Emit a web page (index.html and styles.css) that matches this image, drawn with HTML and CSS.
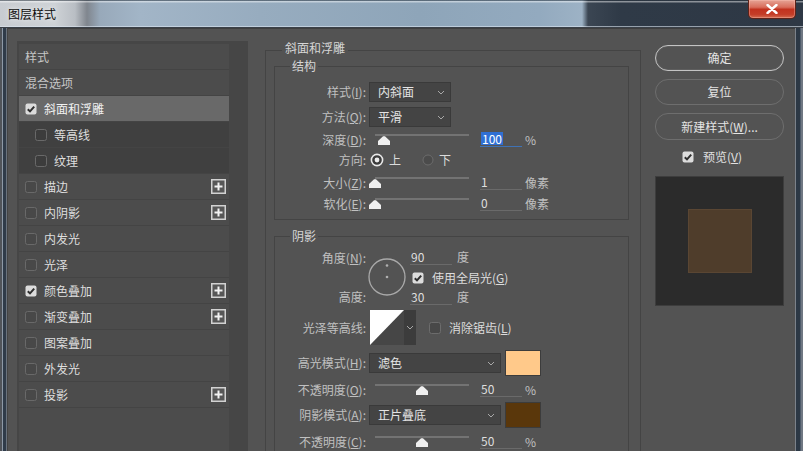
FILE: index.html
```html
<!DOCTYPE html>
<html lang="zh">
<head>
<meta charset="utf-8">
<title>图层样式</title>
<link rel="stylesheet" href="styles.css">
</head>
<body>
<div class="window">
  <div class="titlebar">
    <span class="title">图层样式</span>
    <div class="close"><svg width="12" height="10" viewBox="0 0 12 10"><path d="M1.5 1l9 8M10.5 1l-9 8" stroke="#fff" stroke-width="2.4" stroke-linecap="round"/></svg></div>
  </div>
  <div class="frame">
    <div class="edge-left"></div>
    <div class="content">
      <aside class="sidebar">
        <ul class="list">
          <li class="item plain">样式</li>
          <li class="item plain">混合选项</li>
          <li class="item selected"><span class="cb"><svg viewBox="0 0 12 12"><rect x=".5" y=".5" width="11" height="11" rx="2" fill="#dcdcdc"/><path d="M2.8 6.2l2.2 2.2 4.2-4.8" stroke="#2e2e2e" stroke-width="2" fill="none"/></svg></span>斜面和浮雕</li>
          <li class="item sub"><span class="cb"><svg viewBox="0 0 12 12"><rect x=".5" y=".5" width="11" height="11" rx="2" fill="#3c3c3c" stroke="#696969"/></svg></span>等高线</li>
          <li class="item sub"><span class="cb"><svg viewBox="0 0 12 12"><rect x=".5" y=".5" width="11" height="11" rx="2" fill="#3c3c3c" stroke="#696969"/></svg></span>纹理</li>
          <li class="item"><span class="cb"><svg viewBox="0 0 12 12"><rect x=".5" y=".5" width="11" height="11" rx="2" fill="#484848" stroke="#696969"/></svg></span>描边<span class="plus"><svg viewBox="0 0 15 15"><rect x=".75" y=".75" width="13.5" height="13.5" fill="#575757" stroke="#d2d2d2" stroke-width="1.5"/><path d="M7.5 3.5v8M3.5 7.5h8" stroke="#f2f2f2" stroke-width="2"/></svg></span></li>
          <li class="item"><span class="cb"><svg viewBox="0 0 12 12"><rect x=".5" y=".5" width="11" height="11" rx="2" fill="#484848" stroke="#696969"/></svg></span>内阴影<span class="plus"><svg viewBox="0 0 15 15"><rect x=".75" y=".75" width="13.5" height="13.5" fill="#575757" stroke="#d2d2d2" stroke-width="1.5"/><path d="M7.5 3.5v8M3.5 7.5h8" stroke="#f2f2f2" stroke-width="2"/></svg></span></li>
          <li class="item"><span class="cb"><svg viewBox="0 0 12 12"><rect x=".5" y=".5" width="11" height="11" rx="2" fill="#484848" stroke="#696969"/></svg></span>内发光</li>
          <li class="item"><span class="cb"><svg viewBox="0 0 12 12"><rect x=".5" y=".5" width="11" height="11" rx="2" fill="#484848" stroke="#696969"/></svg></span>光泽</li>
          <li class="item"><span class="cb"><svg viewBox="0 0 12 12"><rect x=".5" y=".5" width="11" height="11" rx="2" fill="#dcdcdc"/><path d="M2.8 6.2l2.2 2.2 4.2-4.8" stroke="#2e2e2e" stroke-width="2" fill="none"/></svg></span>颜色叠加<span class="plus"><svg viewBox="0 0 15 15"><rect x=".75" y=".75" width="13.5" height="13.5" fill="#575757" stroke="#d2d2d2" stroke-width="1.5"/><path d="M7.5 3.5v8M3.5 7.5h8" stroke="#f2f2f2" stroke-width="2"/></svg></span></li>
          <li class="item"><span class="cb"><svg viewBox="0 0 12 12"><rect x=".5" y=".5" width="11" height="11" rx="2" fill="#484848" stroke="#696969"/></svg></span>渐变叠加<span class="plus"><svg viewBox="0 0 15 15"><rect x=".75" y=".75" width="13.5" height="13.5" fill="#575757" stroke="#d2d2d2" stroke-width="1.5"/><path d="M7.5 3.5v8M3.5 7.5h8" stroke="#f2f2f2" stroke-width="2"/></svg></span></li>
          <li class="item"><span class="cb"><svg viewBox="0 0 12 12"><rect x=".5" y=".5" width="11" height="11" rx="2" fill="#484848" stroke="#696969"/></svg></span>图案叠加</li>
          <li class="item"><span class="cb"><svg viewBox="0 0 12 12"><rect x=".5" y=".5" width="11" height="11" rx="2" fill="#484848" stroke="#696969"/></svg></span>外发光</li>
          <li class="item"><span class="cb"><svg viewBox="0 0 12 12"><rect x=".5" y=".5" width="11" height="11" rx="2" fill="#484848" stroke="#696969"/></svg></span>投影<span class="plus"><svg viewBox="0 0 15 15"><rect x=".75" y=".75" width="13.5" height="13.5" fill="#575757" stroke="#d2d2d2" stroke-width="1.5"/><path d="M7.5 3.5v8M3.5 7.5h8" stroke="#f2f2f2" stroke-width="2"/></svg></span></li>
        </ul>
      </aside>

      <main class="main">
        <fieldset class="group outer">
          <legend>斜面和浮雕</legend>

          <fieldset class="group inner structure">
            <legend>结构</legend>
            <div class="frow first">
              <span class="lbl">样式(<u>I</u>):</span>
              <div class="select short"><span>内斜面</span><svg class="chev" width="8" height="5" viewBox="0 0 8 5"><path d="M1 1l3 3 3-3" stroke="#a8a8a8" fill="none"/></svg></div>
            </div>
            <div class="frow gap5">
              <span class="lbl">方法(<u>Q</u>):</span>
              <div class="select short"><span>平滑</span><svg class="chev" width="8" height="5" viewBox="0 0 8 5"><path d="M1 1l3 3 3-3" stroke="#a8a8a8" fill="none"/></svg></div>
            </div>
            <div class="frow gap3">
              <span class="lbl">深度(<u>D</u>):</span>
              <div class="slider"><span class="track"></span><span class="thumb" style="left:9px"></span></div>
              <span class="num focus"><span class="hl">100</span></span>
              <span class="unit">%</span>
            </div>
            <div class="frow">
              <span class="lbl">方向:</span>
              <span class="radio on"><svg viewBox="0 0 14 14"><circle cx="7" cy="7" r="5.6" fill="#3b3b3b" stroke="#e8e8e8" stroke-width="1.6"/><circle cx="7" cy="7" r="2.4" fill="#ececec"/></svg></span>
              <span class="rtext">上</span>
              <span class="radio off"><svg viewBox="0 0 12 12"><circle cx="6" cy="6" r="5" fill="#4b4b4b" stroke="#6c6c6c"/></svg></span>
              <span class="rtext">下</span>
            </div>
            <div class="frow gap3">
              <span class="lbl">大小(<u>Z</u>):</span>
              <div class="slider"><span class="track"></span><span class="thumb" style="left:0px"></span></div>
              <span class="num">1</span>
              <span class="unit">像素</span>
            </div>
            <div class="frow gap1">
              <span class="lbl">软化(<u>E</u>):</span>
              <div class="slider"><span class="track"></span><span class="thumb" style="left:0px"></span></div>
              <span class="num">0</span>
              <span class="unit">像素</span>
            </div>
          </fieldset>

          <fieldset class="group inner shadow">
            <legend>阴影</legend>
            <div class="angle-block">
              <div class="angle-labels">
                <div class="alabel">角度(<u>N</u>):</div>
                <div class="alabel low">高度:</div>
              </div>
              <div class="dial"><svg width="38" height="38" viewBox="0 0 38 38"><circle cx="19" cy="19" r="18" fill="none" stroke="#a9a9a9" stroke-width="1.3"/><circle cx="19" cy="7.5" r="1.3" fill="#b0b0b0"/><circle cx="19" cy="19" r="1.3" fill="#b0b0b0"/></svg></div>
              <div class="angle-vals">
                <div class="vrow"><span class="num small">90</span><span class="unit deg">度</span></div>
                <div class="crow"><span class="cb"><svg viewBox="0 0 12 12"><rect x=".5" y=".5" width="11" height="11" rx="2" fill="#dcdcdc"/><path d="M2.8 6.2l2.2 2.2 4.2-4.8" stroke="#2e2e2e" stroke-width="2" fill="none"/></svg></span><span class="ctext">使用全局光(<u>G</u>)</span></div>
                <div class="vrow"><span class="num small">30</span><span class="unit deg">度</span></div>
              </div>
            </div>
            <div class="frow contour-row">
              <span class="lbl">光泽等高线:</span>
              <div class="contour"><svg width="34" height="35" viewBox="0 0 34 35"><rect width="34" height="35" fill="#464646"/><path d="M0 0H34L0 35Z" fill="#ffffff"/></svg></div>
              <div class="contour-drop"><svg width="8" height="5" viewBox="0 0 8 5"><path d="M1 1l3 3 3-3" stroke="#a8a8a8" fill="none"/></svg></div>
              <span class="cb anti"><svg viewBox="0 0 12 12"><rect x=".5" y=".5" width="11" height="11" rx="2" fill="#484848" stroke="#6c6c6c"/></svg></span>
              <span class="ctext">消除锯齿(<u>L</u>)</span>
            </div>
            <div class="frow mode-row">
              <span class="lbl">高光模式(<u>H</u>):</span>
              <div class="select wide"><span>滤色</span><svg class="chev" width="8" height="5" viewBox="0 0 8 5"><path d="M1 1l3 3 3-3" stroke="#a8a8a8" fill="none"/></svg></div>
              <span class="swatch light"></span>
            </div>
            <div class="frow gap4">
              <span class="lbl">不透明度(<u>O</u>):</span>
              <div class="slider"><span class="track"></span><span class="thumb" style="left:47px"></span></div>
              <span class="num">50</span>
              <span class="unit">%</span>
            </div>
            <div class="frow mode-row gap2">
              <span class="lbl">阴影模式(<u>A</u>):</span>
              <div class="select wide"><span>正片叠底</span><svg class="chev" width="8" height="5" viewBox="0 0 8 5"><path d="M1 1l3 3 3-3" stroke="#a8a8a8" fill="none"/></svg></div>
              <span class="swatch dark"></span>
            </div>
            <div class="frow gap4">
              <span class="lbl">不透明度(<u>C</u>):</span>
              <div class="slider"><span class="track"></span><span class="thumb" style="left:47px"></span></div>
              <span class="num">50</span>
              <span class="unit">%</span>
            </div>
          </fieldset>
        </fieldset>
      </main>

      <div class="actions">
        <div class="btn default">确定</div>
        <div class="btn">复位</div>
        <div class="btn tall">新建样式(<u>W</u>)...</div>
        <div class="preview-row"><span class="cb"><svg viewBox="0 0 12 12"><rect x=".5" y=".5" width="11" height="11" rx="2" fill="#dcdcdc"/><path d="M2.8 6.2l2.2 2.2 4.2-4.8" stroke="#2e2e2e" stroke-width="2" fill="none"/></svg></span><span class="ptext">预览(<u>V</u>)</span></div>
        <div class="preview"><div class="sample"></div></div>
      </div>
    </div>
    <div class="edge-right"></div>
  </div>
</div>
</body>
</html>
```

FILE: styles.css
```css
* { box-sizing: border-box; }
html, body { margin: 0; padding: 0; }
body {
  width: 803px;
  height: 451px;
  overflow: hidden;
  background: #535353;
  font-family: "Noto Sans CJK SC", "Noto Sans", sans-serif;
  font-size: 12px;
  color: #d8d8d8;
}
u { text-decoration-thickness: 1px; text-underline-offset: 1px; }

.window { width: 803px; height: 451px; display: flex; flex-direction: column; }

/* title bar */
.titlebar {
  height: 28px;
  flex: none;
  display: flex;
  align-items: flex-start;
  background:
    linear-gradient(180deg, rgba(40,50,60,.5) 0, rgba(40,50,60,.5) 1px, rgba(255,255,255,.45) 1px, rgba(255,255,255,.45) 2px, transparent 3px, transparent 26px, rgba(220,230,240,.6) 26px, rgba(220,230,240,.6) 27px, #3a4048 27px),
    linear-gradient(90deg, #c8ccd1 0, #ced2d6 55px, #b9bec4 75px, #80868e 87px, #98a9ba 100px, #a2b5c7 140px, #97acbf 260px, #8ea5b9 420px, #93aabf 540px, #9db2c5 582px, #3b4653 588px, #2f3a47 620px, #2e3845 803px);
}
.title {
  margin: 6px 0 0 8px;
  line-height: 16px;
  color: #0c0c0c;
  text-shadow: 0 0 5px rgba(255,255,255,.9);
}
.close {
  margin-left: auto;
  margin-right: 7px;
  width: 48px;
  height: 19px;
  border: 1px solid #5e2218;
  border-top: none;
  border-radius: 0 0 5px 5px;
  background: linear-gradient(180deg, #e6a395 0, #d86d5c 40%, #c2321f 52%, #c43d28 80%, #d46a4f 100%);
  box-shadow: inset 0 0 0 1px rgba(255,200,190,.35);
  display: flex;
  align-items: center;
  justify-content: center;
}

/* frame */
.frame { flex: 1; display: flex; min-height: 0; }
.edge-left {
  width: 8px; flex: none;
  background: linear-gradient(90deg, #50545a 0, #50545a 2px, #8d99a7 2px, #8d99a7 3px, #2f3b49 3px, #2f3b49 6px, #6a737e 6px, #6a737e 7px, #444 7px);
}
.edge-right {
  width: 8px; flex: none;
  background: linear-gradient(90deg, #7c828a 0, #7c828a 1px, #2c3845 1px, #2c3845 5px, #4e5b6a 5px, #4e5b6a 6px, #6f7782 6px);
}
.content {
  flex: 1;
  display: flex;
  align-items: flex-start;
  background: #535353;
  border-top: 1px solid #3f3f3f;
  overflow: hidden;
}

/* sidebar */
.sidebar {
  width: 231px;
  flex: none;
  align-self: stretch;
  margin: 12px 0 0 9px;
  padding: 3px 19px 0 2px;
  background: #464646;
}
.list {
  list-style: none;
  margin: 0;
  padding: 0;
  height: 100%;
  background: #4c4c4c;
}
.item {
  display: flex;
  align-items: center;
  height: 26px;
  padding-left: 6px;
  border-bottom: 1px solid #444;
  color: #dedede;
  line-height: 16px;
}
.item.plain { color: #c6c6c6; }
.item.selected { background: #696969; color: #f2f2f2; }
.item.sub { background: #404040; padding-left: 16px; }
.cb { width: 12px; height: 12px; flex: none; display: inline-flex; margin-right: 7px; }
.cb svg { width: 12px; height: 12px; display: block; }
.plus { margin-left: auto; margin-right: 3px; width: 15px; height: 15px; display: inline-flex; }
.plus svg { width: 15px; height: 15px; display: block; }

/* main */
.main { margin: 12px 0 0 17px; width: 376px; flex: none; }
.group { margin: 0; border: 1px solid #444; min-width: 0; }
.outer {
  width: 376px;
  height: 430px;
  padding: 0 11px 0 8px;
  border-bottom: none;
}
.outer > legend {
  margin-left: 8px;
  padding: 0 3px 4px;
  line-height: 14px;
  color: #d6d6d6;
}
.inner {
  width: 355px;
  padding: 0 0 5px 0;
}
.inner > legend {
  margin-left: 15px;
  padding: 0 2px;
  line-height: 14px;
  color: #d6d6d6;
}
.shadow { margin-top: 9px; height: 240px; border-bottom: none; }

.frow { display: flex; align-items: center; height: 20px; }
.frow.first { margin-top: 9px; }
.gap1 { margin-top: 1px; }
.gap2 { margin-top: 2px; }
.gap3 { margin-top: 3px; }
.gap4 { margin-top: 4px; }
.gap5 { margin-top: 5px; }
.lbl {
  width: 91px;
  flex: none;
  margin-right: 3px;
  text-align: right;
  color: #c0c0c0;
  line-height: 16px;
  white-space: nowrap;
}

.select {
  height: 20px;
  display: flex;
  align-items: center;
  padding-left: 8px;
  background: #444;
  border: 1px solid #3a3a3a;
  color: #e4e4e4;
  line-height: 16px;
}
.select.short { width: 82px; }
.select.wide { width: 132px; height: 20px; }
.chev { margin-left: auto; margin-right: 5px; }

.slider { position: relative; width: 100px; height: 20px; flex: none; }
.track { position: absolute; left: 6px; right: 0; top: 4px; height: 2px; background: #737373; }
.thumb {
  position: absolute;
  top: 6px;
  width: 12px;
  height: 9px;
  background: #efefef;
  clip-path: polygon(42% 4%, 58% 4%, 100% 55%, 100% 100%, 0 100%, 0 55%);
}

.num {
  width: 42px;
  margin-left: 11px;
  align-self: flex-start;
  margin-top: 2px;
  height: 15px;
  line-height: 14px;
  border-bottom: 1px solid #6a6a6a;
  color: #dedede;
  padding-left: 1px;
  flex: none;
}
.num.focus { border-bottom-color: #3f72b5; }
.hl { background: #2f6fd3; color: #fff; padding: 0 1px; display: inline-block; line-height: 13px; }
.unit { margin-left: 3px; color: #c0c0c0; line-height: 16px; }

.radio { display: inline-flex; flex: none; }
.radio.on { width: 14px; height: 14px; margin-left: 1px; }
.radio.on svg { width: 14px; height: 14px; }
.radio.off { width: 12px; height: 12px; margin-left: 21px; }
.radio.off svg { width: 12px; height: 12px; }
.rtext { margin-left: 5px; color: #dcdcdc; line-height: 16px; }

/* angle block */
.angle-block { display: flex; margin-top: 5px; height: 58px; }
.angle-labels { width: 91px; flex: none; text-align: right; color: #c0c0c0; }
.alabel { height: 20px; line-height: 20px; }
.alabel.low { margin-top: 19px; }
.dial { margin: 10px 0 0 2px; width: 38px; height: 38px; flex: none; }
.dial svg { display: block; }
.angle-vals { margin-left: 4px; display: flex; flex-direction: column; }
.vrow { height: 18px; display: flex; }
.num.small { margin-left: 0; }
.unit.deg { margin-left: 5px; line-height: 18px; }
.crow { height: 20px; margin-top: 2px; display: flex; align-items: center; }
.crow .cb { margin-left: 2px; margin-right: 8px; }
.ctext { color: #dcdcdc; line-height: 16px; }

.contour-row { height: 35px; margin-top: 4px; }
.contour { width: 34px; height: 35px; margin-left: 1px; flex: none; }
.contour svg { display: block; }
.contour-drop {
  width: 12px;
  height: 35px;
  background: #3c3c3c;
  display: flex;
  align-items: center;
  justify-content: center;
  flex: none;
}
.cb.anti { margin-left: 13px; margin-right: 8px; }

.mode-row { height: 26px; margin-top: 5px; }
.mode-row.gap2 { margin-top: 2px; }
.swatch { width: 36px; height: 26px; margin-left: 4px; flex: none; border: 1px solid #3c3c3c; }
.swatch.light { background: #ffc98a; }
.swatch.dark { background: #5a370b; }

/* actions */
.actions { margin: 16px 0 0 14px; width: 129px; flex: none; display: flex; flex-direction: column; }
.btn {
  height: 26px;
  border: 1px solid #6e6e6e;
  border-radius: 13px;
  display: flex;
  align-items: center;
  justify-content: center;
  color: #e4e4e4;
  line-height: 16px;
  margin-top: 8px;
}
.btn.default { margin-top: 0; border-color: #c4c4c4; box-shadow: inset 0 0 0 1px #5e5e5e; }
.btn.tall { height: 27px; }
.preview-row { display: flex; align-items: center; height: 20px; margin-top: 7px; padding-left: 27px; }
.preview-row .cb { margin-right: 9px; }
.ptext { color: #e0e0e0; line-height: 16px; }
.preview {
  margin-top: 9px;
  height: 130px;
  background: #2b2b2b;
  border: 1px solid #3d3d3d;
  display: flex;
  align-items: center;
  justify-content: center;
}
.sample { width: 64px; height: 64px; background: #4f3d2b; border: 1px solid #5a4633; }
```
